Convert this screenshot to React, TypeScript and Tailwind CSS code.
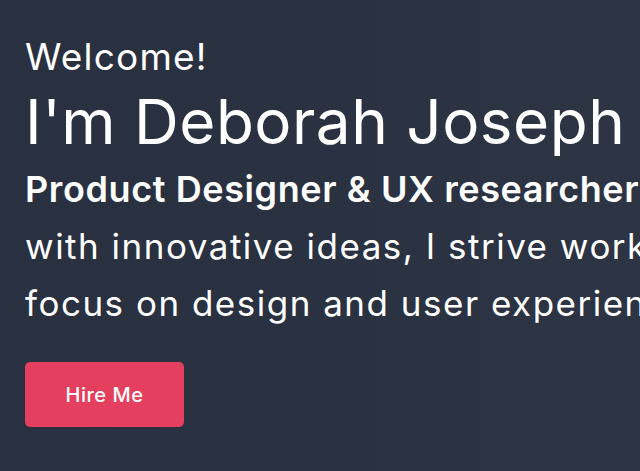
import React from "react";

const App = () => {
  return (
    <div className="h-[471px] w-[640px] overflow-hidden bg-gradient-to-r from-[#29303f] via-[#2a3141] to-[#2d3444] font-['Inter','Liberation_Sans',sans-serif] text-white">
      <div className="whitespace-nowrap pl-[25px] pt-[35px]">
        {/* Intro */}
        <h3 className="text-[37px] font-normal leading-[44px] tracking-[1.2px]">Welcome!</h3>
        <h1 className="text-[62px] font-normal leading-[86px] tracking-[0.5px]">I'm Deborah Joseph</h1>
        <h2 className="text-[36px] font-semibold leading-[49px] tracking-[0.6px]">
          Product Designer &amp; UX researcher
        </h2>
        <p className="mt-[4px] text-[35px] leading-[57px] tracking-[1.5px]">
          with innovative ideas, I strive working
          <br />
          focus on design and user experience
        </p>

        {/* Button */}
        <button className="mt-[30px] h-[65px] w-[159px] rounded-[5px] bg-[#e43f5f] text-[20px] font-medium tracking-[0.5px]">
          Hire Me
        </button>
      </div>
    </div>
  );
};

export default App;
